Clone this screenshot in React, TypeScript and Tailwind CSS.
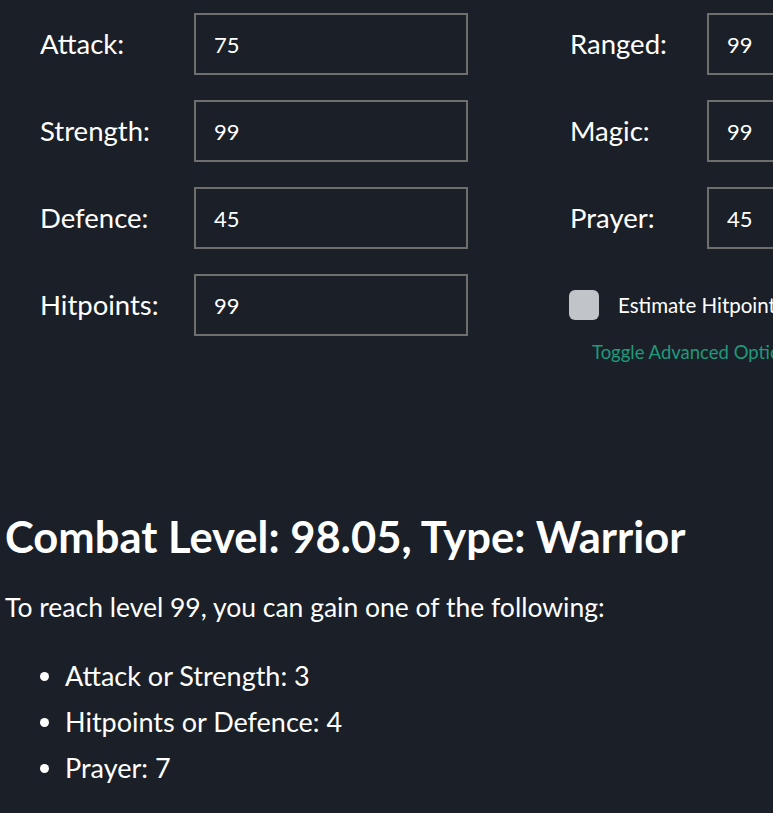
const left = [
  { label: 'Attack:', value: '75' },
  { label: 'Strength:', value: '99' },
  { label: 'Defence:', value: '45' },
  { label: 'Hitpoints:', value: '99' },
];

const right = [
  { label: 'Ranged:', value: '99' },
  { label: 'Magic:', value: '99' },
  { label: 'Prayer:', value: '45' },
];

function SkillRow({ label, value, labelWidth }: { label: string; value: string; labelWidth: string }) {
  return (
    <div className="flex items-center h-[62px]">
      <label className={`${labelWidth} text-[27.5px] text-white`}>{label}</label>
      <input
        defaultValue={value}
        className="w-[274px] h-[62px] shrink-0 border-2 border-[#6e6e6e] bg-transparent px-[18px] text-[22px] text-white outline-none"
      />
    </div>
  );
}

export default function App() {
  return (
    <div
      className="min-h-screen w-full overflow-hidden bg-[#1b1f27] text-white"
      style={{ fontFamily: 'Lato, "Noto Sans", sans-serif' }}
    >
      <div className="flex pt-[13px] pl-[40px] gap-[102px] w-[1200px]">
        <div className="flex flex-col gap-[25px]">
          {left.map(s => (
            <SkillRow key={s.label} label={s.label} value={s.value} labelWidth="w-[154px]" />
          ))}
        </div>
        <div className="flex flex-col gap-[25px]">
          {right.map(s => (
            <SkillRow key={s.label} label={s.label} value={s.value} labelWidth="w-[137px]" />
          ))}
          <div className="flex items-center h-[62px] -ml-[1px]">
            <span className="w-[30px] h-[30px] rounded-[6px] bg-[#c1c5c9]" />
            <span className="ml-[19px] text-[20.5px] text-white whitespace-nowrap">Estimate Hitpoints</span>
          </div>
          <a className="-mt-[22px] ml-[22px] text-[18.5px] text-[#1e9a7c] whitespace-nowrap">Toggle Advanced Options</a>
        </div>
      </div>

      <div className="px-[5px] pt-[142px]">
        <h1 className="text-[43.5px] font-bold leading-tight">Combat Level: 98.05, Type: Warrior</h1>
        <p className="mt-[25px] text-[26.5px]">To reach level 99, you can gain one of the following:</p>
        <ul className="mt-[25px] list-disc pl-[60px] text-[27px] leading-[46px]">
          <li>Attack or Strength: 3</li>
          <li>Hitpoints or Defence: 4</li>
          <li>Prayer: 7</li>
        </ul>
      </div>
    </div>
  );
}
